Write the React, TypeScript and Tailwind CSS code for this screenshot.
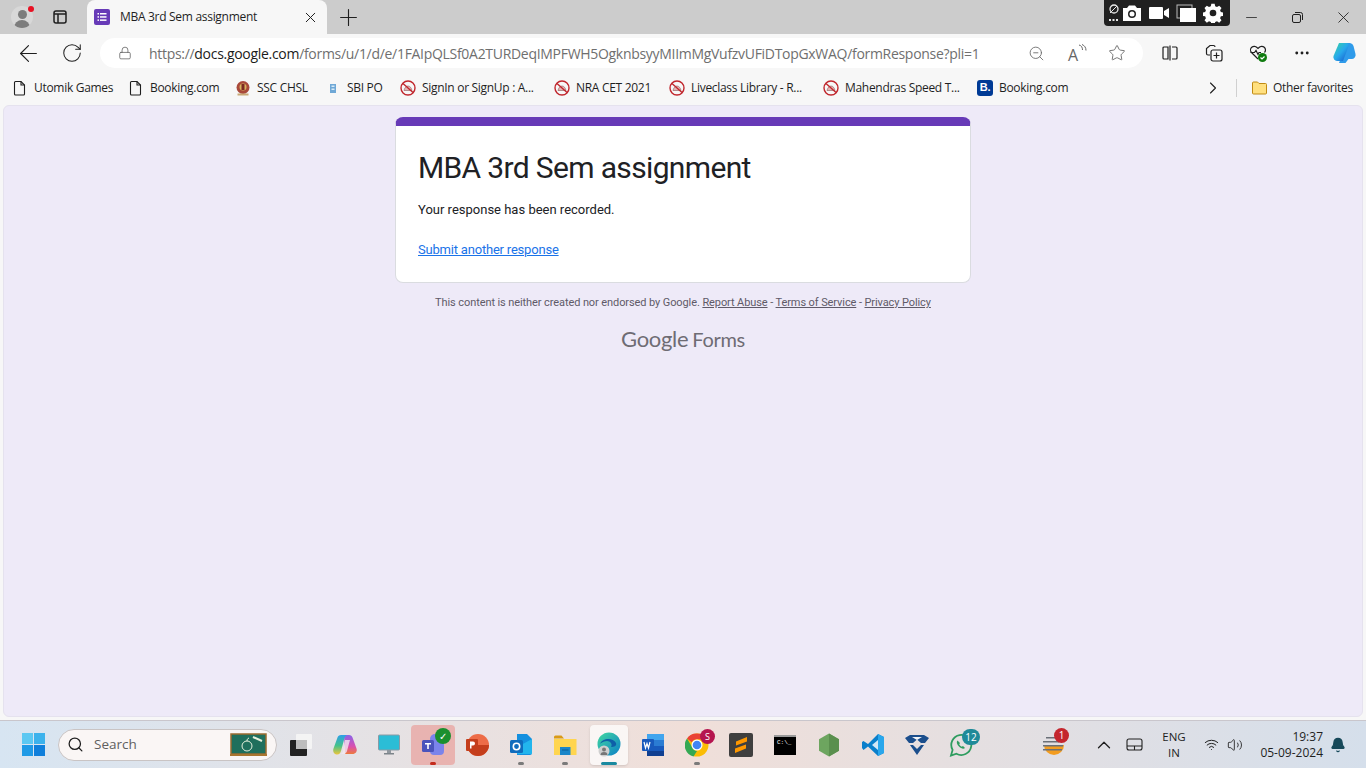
import type { ReactNode } from "react";
import { ChevronRight, ChevronUp, MoreHorizontal, Plus, RotateCw, ArrowLeft, X, Minus, Star, ZoomOut, Search, Bell, Volume2, Wifi, Lock } from "lucide-react";

const ui = "font-['Open_Sans','Noto_Sans',sans-serif]";

const PageIcon = () => (
  <svg width="16" height="16" viewBox="0 0 16 16" fill="none" stroke="#1f1f1f" strokeWidth="1.1">
    <path d="M3.5 1.5h5.5l3.5 3.5v9a1 1 0 0 1-1 1h-8a1 1 0 0 1-1-1v-11.5a1 1 0 0 1 1-1z" />
    <path d="M9 1.5v3.5h3.500" />
  </svg>
);

const BlockedIcon = () => (
  <svg width="16" height="16" viewBox="0 0 16 16" fill="none">
    <circle cx="8" cy="8" r="7" stroke="#c0262c" strokeWidth="1.4" />
    <path d="M4 10.5c.5-2.500 2-4.500 4-4.500s3.500 2 4 4.500z" fill="#e6b3b3" stroke="#8d5a5a" strokeWidth=".6" />
    <path d="M3 3.5l10 9" stroke="#c0262c" strokeWidth="1.4" />
  </svg>
);

const SscIcon = () => (
  <svg width="16" height="16" viewBox="0 0 16 16">
    <circle cx="8" cy="7.5" r="6.5" fill="#a9493a" />
    <circle cx="8" cy="7" r="3.5" fill="#d8b45f" />
    <path d="M6.5 4h3v6h-3z" fill="#7d2a22" />
    <path d="M2.5 13.5h11v2h-11z" fill="#c9a977" />
  </svg>
);

const SbiIcon = () => (
  <svg width="16" height="16" viewBox="0 0 16 16">
    <rect x="5" y="4" width="6" height="9" fill="#6fa8d6" />
    <rect x="6.5" y="5.5" width="3" height="1.5" fill="#d9ebf7" />
    <rect x="6.5" y="8.5" width="3" height="1.5" fill="#d9ebf7" />
  </svg>
);

const BookingIcon = () => (
  <div className="flex h-4 w-4 items-center justify-center rounded-[3px] bg-[#003b95] font-['Liberation_Sans',sans-serif] text-[11px] font-bold leading-none text-white">
    B.
  </div>
);

const FolderIcon = () => (
  <svg width="17" height="16" viewBox="0 0 17 16">
    <path d="M1.5 3a1 1 0 0 1 1-1h4l1.500 1.500h6.500a1 1 0 0 1 1 1v8.500a1 1 0 0 1-1 1h-12a1 1 0 0 1-1-1z" fill="#ffe07f" stroke="#c08a12" strokeWidth="1" />
  </svg>
);

const FormsIcon = () => (
  <svg width="16" height="16" viewBox="0 0 16 16">
    <rect width="16" height="16" rx="2" fill="#673ab7" />
    <g fill="#fff">
      <rect x="3.5" y="4" width="1.5" height="1.5" />
      <rect x="6" y="4" width="6.5" height="1.5" />
      <rect x="3.5" y="7.2" width="1.5" height="1.5" />
      <rect x="6" y="7.2" width="6.5" height="1.5" />
      <rect x="3.5" y="10.4" width="1.5" height="1.5" />
      <rect x="6" y="10.4" width="6.5" height="1.5" />
    </g>
  </svg>
);

const Profile = () => (
  <div className="relative h-[22px] w-[22px] overflow-hidden rounded-full bg-[#d8d8d8]">
    <div className="mx-auto mt-[4px] h-[9px] w-[9px] rounded-full bg-[#7c7c7c]" />
    <div className="mx-auto mt-[1px] h-[9px] w-[16px] rounded-t-full bg-[#7c7c7c]" />
  </div>
);

const ReadAloud = () => (
  <div className="relative ml-[23px] h-[18px] w-[19px]">
    <span className={`${ui} absolute bottom-[-2px] left-0 text-[16px] leading-[18px] text-[#666]`}>A</span>
    <svg width="9" height="10" viewBox="0 0 9 10" fill="none" stroke="#666" strokeWidth="1" className="absolute right-0 top-0">
      <path d="M1 1c2.500.5 3.500 2.500 3.500 5M4 .5c2.500 1 4 3 4 6" />
    </svg>
  </div>
);

const Toolbar = () => (
  <div className="flex h-[36px] items-center pt-[2px]">
    <div className="flex w-[100px] items-center pl-[15px]">
      <ArrowLeft size={27} strokeWidth={1} className="text-[#1f1f1f]" />
      <RotateCw size={22} strokeWidth={1.1} className="ml-[19px] text-[#1f1f1f]" />
    </div>
    <div className="flex h-[30px] w-[1043px] items-center rounded-full bg-white">
      <Lock size={14} strokeWidth={1.3} className="ml-[18px] text-[#5c5c5c]" />
      <div className={`${ui} ml-[17px] w-[840px] whitespace-nowrap text-[14px] tracking-[-0.3px] text-[#6f6f6f]`}>
        https://<span className="text-[#1b1b1b]">docs.google.com</span>/forms/u/1/d/e/1FAIpQLSf0A2TURDeqIMPFWH5OgknbsyyMIImMgVufzvUFiDTopGxWAQ/formResponse?pli=1
      </div>
      <ZoomOut size={17} strokeWidth={1.2} className="ml-[39px] text-[#666]" />
      <ReadAloud />
      <Star size={18} strokeWidth={1.2} className="ml-[21px] text-[#666]" />
    </div>
    <div className="flex flex-1 items-center pl-[18px]">
      <svg width="18" height="18" viewBox="0 0 18 18" fill="none" stroke="#1f1f1f" strokeWidth="1.2">
        <path d="M7 3H3a1 1 0 0 0-1 1v10a1 1 0 0 0 1 1h4zM11 3h4a1 1 0 0 1 1 1v10a1 1 0 0 1-1 1h-4M9 1.5v15" />
      </svg>
      <svg width="20" height="20" viewBox="0 0 20 20" fill="none" stroke="#1f1f1f" strokeWidth="1.2" className="ml-[25px]">
        <path d="M6 12H4a1.5 1.5 0 0 1-1.5-1.5V5.500L6 2.500h3.500a1.500 1.500 0 0 1 1.500 1.500" />
        <rect x="7" y="7" width="11" height="11" rx="2" />
        <path d="M12.5 9.5v6M9.5 12.5h6" />
      </svg>
      <svg width="20" height="20" viewBox="0 0 20 20" fill="none" stroke="#1f1f1f" strokeWidth="1.2" className="ml-[24px]">
        <path d="M10 16L3.500 9.500a3.700 3.700 0 0 1 5.500-5l1 1 1-1a3.700 3.700 0 0 1 5.500 5" />
        <path d="M2.5 9.5h4l1.500-2 2 4 1-2h2" />
        <circle cx="14.5" cy="14.5" r="4.500" fill="#107c10" stroke="none" />
        <path d="M12.5 14.5l1.500 1.500 2.500-2.500" stroke="#fff" />
      </svg>
      <MoreHorizontal size={18} strokeWidth={1.8} className="ml-[25px] text-[#1f1f1f]" />
      <svg width="26" height="24" viewBox="0 0 26 24" className="ml-[20px]">
        <defs>
          <linearGradient id="cop" x1="0" y1="0" x2="1" y2="1">
            <stop offset="0" stopColor="#37d6a0" />
            <stop offset=".5" stopColor="#28a9ec" />
            <stop offset="1" stopColor="#1650c8" />
          </linearGradient>
        </defs>
        <path d="M16 2h3a4 4 0 0 1 3.500 3l2 8a4 4 0 0 1-4 5h-3l-3 4H8z" fill="#2f9bea" />
        <path d="M8 2h8l2 2-6 16H6a4 4 0 0 1-3.500-5z" fill="url(#cop)" />
      </svg>
    </div>
  </div>
);

const bookmarks = [
  { icon: <PageIcon />, label: "Utomik Games", w: "w-[128px]", pad: "pl-[12px]" },
  { icon: <PageIcon />, label: "Booking.com", w: "w-[107px]", pad: "" },
  { icon: <SscIcon />, label: "SSC CHSL", w: "w-[90px]", pad: "" },
  { icon: <SbiIcon />, label: "SBI PO", w: "w-[75px]", pad: "" },
  { icon: <BlockedIcon />, label: "SignIn or SignUp : A...", w: "w-[154px]", pad: "" },
  { icon: <BlockedIcon />, label: "NRA CET 2021", w: "w-[115px]", pad: "" },
  { icon: <BlockedIcon />, label: "Liveclass Library - R...", w: "w-[154px]", pad: "" },
  { icon: <BlockedIcon />, label: "Mahendras Speed T...", w: "w-[154px]", pad: "" },
  { icon: <BookingIcon />, label: "Booking.com", w: "w-[110px]", pad: "" },
];

const BookmarksBar = () => (
  <div className={`${ui} flex h-[35px] items-center text-[12px] tracking-[-0.3px] text-[#1f1f1f]`}>
    {bookmarks.map((b, i) => (
      <div key={i} className={`flex shrink-0 items-center gap-[5px] ${b.w} ${b.pad}`}>
        {b.icon}
        <span className="whitespace-nowrap pl-[1px]">{b.label}</span>
      </div>
    ))}
    <ChevronRight size={20} strokeWidth={1.3} className="ml-[116px] text-[#1f1f1f]" />
    <div className="ml-[13px] h-[18px] w-px bg-[#d0d0d0]" />
    <div className="ml-[14px] flex items-center gap-[5px]">
      <FolderIcon />
      <span className="whitespace-nowrap">Other favorites</span>
    </div>
  </div>
);

const GoogleFormsMark = () => (
  <div className="mt-[16px] flex items-baseline justify-center font-['Lato',sans-serif] text-[22px] leading-[26px] tracking-[-0.3px] text-[#6e6c74]">
    <span>Google</span>
    <span className="ml-[4px] text-[20px]">Forms</span>
  </div>
);

const FormCard = () => (
  <div className="mx-auto w-[576px] rounded-[8px] border border-t-[9px] border-[#dadce0] border-t-[#673ab7] bg-white">
    <div className="px-[22px] pb-[22px] pt-[24px] font-['Roboto',sans-serif]">
      <h1 className="text-[30px] leading-[36px] tracking-[-0.65px] text-[#202124]">MBA 3rd Sem assignment</h1>
      <p className="mt-[14px] text-[13px] leading-[20px] text-[#202124]">Your response has been recorded.</p>
      <a className="mt-[20px] block text-[13px] leading-[20px] tracking-[-0.2px] text-[#1a73e8] underline">Submit another response</a>
    </div>
  </div>
);

const Footer = () => (
  <div className="mt-[13px] text-center font-['Roboto',sans-serif] text-[11px] leading-[14px] tracking-[-0.095px] text-[#5f5a68]">
    This content is neither created nor endorsed by Google. <a className="underline">Report Abuse</a> - <a className="underline">Terms of Service</a> - <a className="underline">Privacy Policy</a>
  </div>
);

const Slot = ({ children, dot, active }: { children: ReactNode; dot?: string; active?: boolean }) => (
  <div className={`relative flex h-[40px] shrink-0 items-center justify-center rounded-[4px] ${active ? "mx-[3px] w-[38px] bg-white/70 shadow-sm" : "w-[44px]"}`}>
    {children}
    {dot && <div className={`absolute bottom-0 left-1/2 h-[3px] -translate-x-1/2 rounded-full ${dot}`} />}
  </div>
);

const Badge = ({ text, cls }: { text: string; cls: string }) => (
  <div className={`absolute flex items-center justify-center rounded-full font-['Open_Sans',sans-serif] leading-none text-white ${cls}`}>{text}</div>
);

const TaskView = () => (
  <svg width="24" height="24" viewBox="0 0 24 24">
    <rect x="7" y="1" width="16" height="15" rx="1" fill="#f4f4f4" />
    <rect x="1" y="7" width="17" height="16" rx="1" fill="#222" />
    <rect x="7" y="7" width="11" height="9" fill="#bdbdbd" />
  </svg>
);

const CopilotTask = () => (
  <svg width="26" height="24" viewBox="0 0 26 24">
    <defs>
      <linearGradient id="cp2a" x1="0" y1="0" x2="0" y2="1">
        <stop offset="0" stopColor="#2c9fe8" />
        <stop offset=".55" stopColor="#45c28a" />
        <stop offset="1" stopColor="#f0c53a" />
      </linearGradient>
      <linearGradient id="cp2b" x1="0" y1="0" x2="0" y2="1">
        <stop offset="0" stopColor="#8a63e8" />
        <stop offset=".6" stopColor="#d94fb0" />
        <stop offset="1" stopColor="#ee7a3c" />
      </linearGradient>
    </defs>
    <path d="M12 2h5c1.800 0 3 1 3.500 2.500l4 11c1 3-1 5.500-4 5.500H13z" fill="url(#cp2b)" />
    <path d="M9 2h6c-1.200.5-2 1.500-2.500 3L9 18c-.5 2-2 4-4.500 3.500C2 21 .5 18.500 1.500 15.500L5.500 4.500C6 3 7.200 2 9 2z" fill="url(#cp2a)" />
    <path d="M13 7h5l-3 11c-.3 1.500-1.500 3-3 3H8c2 0 2.800-1.500 3.200-3z" fill="#f4e9f2" opacity=".8" />
  </svg>
);

const MonitorIcon = () => (
  <svg width="22" height="22" viewBox="0 0 22 22">
    <rect x="0.5" y="1" width="21" height="15" rx="1" fill="#2bbdd6" stroke="#8a9aa5" />
    <rect x="9" y="16" width="4" height="3" fill="#8f979e" />
    <rect x="6" y="19" width="10" height="1.5" fill="#7c848a" />
  </svg>
);

const TeamsIcon = () => (
  <svg width="24" height="24" viewBox="0 0 24 24">
    <circle cx="14" cy="6" r="5" fill="#7b83eb" />
    <rect x="9" y="8" width="14" height="14" rx="4" fill="#7b83eb" />
    <rect x="1" y="7" width="12" height="12" rx="1.5" fill="#4b53bc" />
    <path d="M4 10h6v1.400H7.800V16H6.200v-4.600H4z" fill="#fff" />
  </svg>
);

const PptIcon = () => (
  <svg width="24" height="24" viewBox="0 0 24 24">
    <circle cx="13" cy="12" r="11" fill="#ed6c47" />
    <path d="M13 12h11a11 11 0 0 1-22 0z" fill="#c43e1c" />
    <rect x="1" y="6" width="12" height="12" rx="1" fill="#c43e1c" />
    <path d="M5 8.500h3a2 2 0 0 1 0 4H6.500V15.500H5z" fill="#fff" />
  </svg>
);

const OutlookIcon = () => (
  <svg width="24" height="24" viewBox="0 0 24 24">
    <path d="M8 1h10l5 5v14a2 2 0 0 1-2 2H8z" fill="#1490df" />
    <path d="M12 12l11-6v15H8z" fill="#28c4f2" opacity=".7" />
    <rect x="1" y="7" width="13" height="13" rx="1.5" fill="#0f6cbd" />
    <circle cx="7.5" cy="13.5" r="3.2" fill="none" stroke="#fff" strokeWidth="1.6" />
  </svg>
);

const ExplorerIcon = () => (
  <svg width="24" height="24" viewBox="0 0 24 24">
    <path d="M1 4a1.500 1.500 0 0 1 1.500-1.500h6L11 5.500H1z" fill="#d99a16" />
    <path d="M1 6h22.500v16H1z" fill="#ffd54f" />
    <path d="M7 14h10.500v8H7z" fill="#1a86c9" />
    <path d="M9 16.500h6.500v1H9z" fill="#0a5c94" />
  </svg>
);

const EdgeIcon = () => (
  <svg width="26" height="26" viewBox="0 0 26 26">
    <defs>
      <linearGradient id="edgeg" x1="0" y1="0" x2="1" y2="1">
        <stop offset="0" stopColor="#42d9a0" />
        <stop offset="1" stopColor="#0c7fc7" />
      </linearGradient>
    </defs>
    <circle cx="13" cy="12" r="11.5" fill="url(#edgeg)" />
    <path d="M4 12c2-6 13-7 16-1 1 3-2 4-5 4 2-3-1-6-4-6-4 0-7 3-7 3z" fill="#0e5fa8" />
    <circle cx="8" cy="19" r="5.5" fill="#cfcfcf" />
    <circle cx="8" cy="17.5" r="2" fill="#777" />
    <path d="M4.500 23a3.500 3 0 0 1 7 0z" fill="#777" />
  </svg>
);

const WordIcon = () => (
  <svg width="24" height="24" viewBox="0 0 24 24">
    <rect x="6" y="1" width="17" height="6" fill="#41a5ee" />
    <rect x="6" y="7" width="17" height="6" fill="#2b7cd3" />
    <rect x="6" y="13" width="17" height="5" fill="#185abd" />
    <rect x="6" y="18" width="17" height="5" fill="#103f91" />
    <rect x="1" y="6" width="12" height="12" rx="1" fill="#185abd" />
    <path d="M3 9l1.500 6 1.500-4.500 1.500 4.500 1.500-6" fill="none" stroke="#fff" strokeWidth="1.2" />
  </svg>
);

const ChromeIcon = () => (
  <svg width="24" height="24" viewBox="0 0 24 24">
    <circle cx="12" cy="12" r="11.5" fill="#fbbc04" />
    <path d="M12 .5a11.500 11.500 0 0 1 10 5.700H12a6 6 0 0 0-5.200 3L2 5.500A11.500 11.500 0 0 1 12 .5z" fill="#ea4335" />
    <path d="M2 5.500l5 8.500a6 6 0 0 0 5 4l-3.500 5.500A11.500 11.500 0 0 1 2 5.500z" fill="#34a853" />
    <circle cx="12" cy="12" r="5.5" fill="#fff" />
    <circle cx="12" cy="12" r="4.3" fill="#4285f4" />
  </svg>
);

const SublimeIcon = () => (
  <div className="flex h-6 w-6 items-center justify-center rounded-[2px] bg-[#3f3f3f]">
    <svg width="14" height="18" viewBox="0 0 14 18">
      <path d="M2 5.500L13 1v4.500L2 9.500zM12 12.500L1 17v-4.500l11-4z" fill="#ff9800" />
    </svg>
  </div>
);

const CmdIcon = () => (
  <div className="h-[20px] w-[22px] border-t-[2px] border-[#9a9a9a] bg-black pl-[3px] pt-[2px] font-['Liberation_Mono',monospace] text-[6px] leading-[7px] text-white">
    C:\_
  </div>
);

const NodeIcon = () => (
  <svg width="22" height="24" viewBox="0 0 22 24">
    <path d="M11 .5l10 5.700v11.600l-10 5.700-10-5.700V6.200z" fill="#6da55f" />
    <path d="M11 .5l10 5.700v11.600l-10 5.700z" fill="#5a8f4e" />
  </svg>
);

const VsCodeIcon = () => (
  <svg width="24" height="24" viewBox="0 0 24 24">
    <path d="M17 1l6 3v16l-6 3-10-9.500-4.500 3.500L1 15v-6l1.500-1L7 11z" fill="#0a7fcb" />
    <path d="M17 1l6 3v16l-6 3z" fill="#2aa7ec" />
    <path d="M17 7l-6 5 6 5z" fill="#e8f3fb" opacity=".9" />
  </svg>
);

const TallyIcon = () => (
  <svg width="26" height="24" viewBox="0 0 26 24">
    <path d="M1 5l5-3h14l5 3-4 5H17l-4-3.500L9 10H5z" fill="#1b4e8c" />
    <path d="M6 12h3l4 4 4-4h3l-7 10z" fill="#1b4e8c" />
    <path d="M8 4h10l-5 3z" fill="#f2f5f9" />
  </svg>
);

const WhatsappIcon = () => (
  <svg width="24" height="24" viewBox="0 0 24 24" fill="none">
    <path d="M2 22.500l1.600-5.600a10 10 0 1 1 3.800 3.800z" stroke="#2e9c5f" strokeWidth="1.8" />
    <path d="M8.500 7.500c-1.500 1.500-.5 4 1.500 6s4.500 3 6 1.500l-2-2-1.300.8c-1-.5-2-1.500-2.500-2.500l.8-1.300z" fill="#2e9c5f" />
  </svg>
);

const StackIcon = () => (
  <svg width="24" height="24" viewBox="0 0 24 24">
    <path d="M3 12h20a10 10 0 0 1-20 0z" fill="#f39c1f" />
    <path d="M5 4h9v1.500H5zM2 8h16v1.500H2zM2 12h20v1.500H2zM2 16h19v1.500H2z" fill="#6b7078" />
  </svg>
);

const Blackboard = () => (
  <svg width="37" height="24" viewBox="0 0 37 24" className="absolute right-[9px] top-[3px]">
    <rect x="1" y="1" width="35" height="20" fill="#1f6f5c" stroke="#9a6b2f" strokeWidth="1.5" />
    <circle cx="17" cy="13" r="5" fill="none" stroke="#e6f0dc" strokeWidth="1" />
    <path d="M17 8c0-1.500.5-2.500 2-3" fill="none" stroke="#e6f0dc" />
    <path d="M23 4l9 4" stroke="#e6f0dc" strokeWidth="2" />
    <rect y="21" width="37" height="2" fill="#a9752f" />
  </svg>
);

const Taskbar = () => (
  <div className={`${ui} flex h-[48px] items-center border-t border-[#c9c6cc] bg-gradient-to-r from-[#d7e5f2] via-[#f0dfd9] to-[#d5dfeb] text-[#1f1f1f]`}>
    <div className="flex w-[58px] shrink-0 justify-center pl-[8px]">
      <div className="grid h-[23px] w-[23px] grid-cols-2 gap-[1px]">
        <div className="bg-[#5cc8f2]" />
        <div className="bg-[#3cb2ec]" />
        <div className="bg-[#1f9ae6]" />
        <div className="bg-[#0f7fdb]" />
      </div>
    </div>
    <div className="relative flex h-[32px] w-[219px] shrink-0 items-center rounded-full border border-[#c9c4c4] bg-[#faf6f5]">
      <Search size={17} strokeWidth={1.8} className="ml-[8px] text-[#1f1f1f]" />
      <span className="ml-[10px] text-[13.5px] text-[#5f5f5f]">Search</span>
      <Blackboard />
    </div>
    <div className="ml-[2px] flex items-center">
      <Slot><TaskView /></Slot>
      <Slot><CopilotTask /></Slot>
      <Slot><MonitorIcon /></Slot>
      <Slot dot="w-[6px] bg-[#c42b1c]">
        <div className="absolute inset-0 rounded-[4px] bg-[#e9a8a4]/80" />
        <div className="relative"><TeamsIcon /></div>
        <Badge text="✓" cls="right-[4px] top-[3px] h-[16px] w-[16px] bg-[#1a8f2e] text-[10px]" />
      </Slot>
      <Slot><PptIcon /></Slot>
      <Slot dot="w-[6px] bg-[#7a7a7a]"><OutlookIcon /></Slot>
      <Slot dot="w-[6px] bg-[#7a7a7a]"><ExplorerIcon /></Slot>
      <Slot active dot="w-[16px] bg-[#1a8aa0]"><EdgeIcon /></Slot>
      <Slot><WordIcon /></Slot>
      <Slot dot="w-[6px] bg-[#7a7a7a]">
        <ChromeIcon />
        <Badge text="S" cls="right-[4px] top-[4px] h-[15px] w-[15px] bg-[#b5154f] text-[9px]" />
      </Slot>
      <Slot><SublimeIcon /></Slot>
      <Slot><CmdIcon /></Slot>
      <Slot><NodeIcon /></Slot>
      <Slot><VsCodeIcon /></Slot>
      <Slot><TallyIcon /></Slot>
      <Slot>
        <WhatsappIcon />
        <Badge text="12" cls="right-[3px] top-[4px] h-[16px] w-[18px] bg-[#1f8a99] text-[10px]" />
      </Slot>
    </div>
    <div className="relative ml-[58px]">
      <StackIcon />
      <Badge text="1" cls="right-[-4px] top-[-5px] h-[15px] w-[15px] bg-[#c4262e] text-[10px]" />
    </div>
    <ChevronUp size={22} strokeWidth={1.4} className="ml-[28px]" />
    <svg width="17" height="14" viewBox="0 0 17 14" fill="none" stroke="#222" strokeWidth="1.1" className="ml-[11px]">
      <rect x="1" y="1" width="15" height="11" rx="2" />
      <path d="M1 8h15M8.500 8v4" />
    </svg>
    <div className="ml-[18px] w-[26px] text-center text-[11.5px] leading-[16px]">
      <div>ENG</div>
      <div>IN</div>
    </div>
    <Wifi size={15} strokeWidth={1.6} className="ml-[17px]" />
    <Volume2 size={16} strokeWidth={1.3} className="ml-[8px]" />
    <div className="ml-[16px] w-[64px] text-right text-[12px] leading-[16px]">
      <div>19:37</div>
      <div className="whitespace-nowrap">05-09-2024</div>
    </div>
    <Bell size={16} fill="#17495a" stroke="#17495a" className="ml-[7px]" />
  </div>
);

const Recorder = () => (
  <div className="absolute left-[1104px] top-0 flex h-[26px] w-[126px] items-center rounded-b-[4px] bg-[#202020] pl-[4px] text-white">
    <svg width="11" height="18" viewBox="0 0 11 18" fill="#e8e8e8">
      <circle cx="6" cy="5" r="4" fill="none" stroke="#e8e8e8" strokeWidth="1.3" />
      <path d="M2 9l7-7" stroke="#e8e8e8" />
      <rect x="1" y="15" width="2" height="2" />
      <rect x="4.5" y="15" width="2" height="2" />
      <rect x="8" y="15" width="2" height="2" />
    </svg>
    <svg width="20" height="18" viewBox="0 0 20 18" className="ml-[3px]">
      <path d="M1 4h4l2-2.500h6L15 4h4v13H1z" fill="#fff" />
      <circle cx="10" cy="10" r="4" fill="#202020" />
      <circle cx="10" cy="10" r="2.5" fill="#fff" />
    </svg>
    <svg width="20" height="14" viewBox="0 0 20 14" className="ml-[7px]">
      <rect x="0" y="1" width="14" height="12" rx="1" fill="#fff" />
      <path d="M15 5l5-3v10l-5-3z" fill="#fff" />
    </svg>
    <svg width="20" height="18" viewBox="0 0 20 18" className="ml-[7px]">
      <rect x="1" y="1" width="15" height="13" fill="none" stroke="#bbb" />
      <rect x="4" y="4" width="16" height="14" fill="#fff" />
    </svg>
    <svg width="20" height="20" viewBox="0 0 24 24" className="ml-[7px]" fill="#fff">
      <path d="M10 1h4l.6 3 2.200.9 2.600-1.700 2.800 2.800-1.700 2.600.9 2.200 3 .6v4l-3 .6-.9 2.200 1.700 2.600-2.800 2.800-2.600-1.700-2.200.9-.6 3h-4l-.6-3-2.200-.9-2.600 1.700-2.800-2.800 1.700-2.600-.9-2.200-3-.6v-4l3-.6.9-2.200-1.700-2.600 2.800-2.800 2.600 1.700 2.200-.9z" />
      <circle cx="12" cy="12" r="4" fill="#202020" />
    </svg>
  </div>
);

export default function App() {
  return (
    <div className="flex h-[768px] w-[1366px] flex-col overflow-hidden bg-[#f7f7f7]">
      {/* tab strip */}
      <div className="relative flex h-[34px] shrink-0 items-end bg-[#cccccc]">
        <div className="flex h-full w-[87px] items-center pl-[11px]">
          <div className="relative">
            <Profile />
            <div className="absolute right-[-1px] top-0 h-[6px] w-[6px] rounded-full bg-[#e81123]" />
          </div>
          <svg width="14" height="14" viewBox="0 0 14 14" fill="none" stroke="#1f1f1f" strokeWidth="1.5" className="ml-[20px]">
            <rect x="1" y="1" width="12" height="12" rx="2" />
            <path d="M1 4h12M5 4v9" />
          </svg>
        </div>
        <div className={`${ui} flex h-[34px] w-[240px] items-center rounded-t-[8px] bg-[#f7f7f7] pl-[7px] text-[12px] tracking-[-0.3px] text-[#1f1f1f]`}>
          <FormsIcon />
          <span className="ml-[10px] w-[137px] whitespace-nowrap">MBA 3rd Sem assignment</span>
          <X size={17} strokeWidth={1.4} className="ml-[45px]" />
        </div>
        <div className="flex h-full items-center pl-[8px]">
          <Plus size={27} strokeWidth={1} className="text-[#1f1f1f]" />
        </div>
        <div className="ml-auto flex h-full items-center text-[#1f1f1f]">
          <div className="flex w-[46px] justify-center"><Minus size={17} strokeWidth={1.1} /></div>
          <div className="flex w-[46px] justify-center">
            <svg width="11" height="11" viewBox="0 0 11 11" fill="none" stroke="#1f1f1f">
              <rect x=".5" y="2.5" width="8" height="8" rx="1.5" />
              <path d="M3 .5h5.500a2 2 0 0 1 2 2V8" />
            </svg>
          </div>
          <div className="flex w-[46px] justify-center"><X size={19} strokeWidth={1.1} /></div>
        </div>
        <Recorder />
      </div>

      <div className="shrink-0">
        <Toolbar />
        <BookmarksBar />
      </div>

      {/* page */}
      <div className="mx-[3px] min-h-0 flex-1 rounded-[6px] border border-[#e5e2ee] bg-[#eeeaf8] pt-[11px]">
        <FormCard />
        <Footer />
        <GoogleFormsMark />
      </div>
      <div className="h-[3px] shrink-0" />

      <Taskbar />
    </div>
  );
}
